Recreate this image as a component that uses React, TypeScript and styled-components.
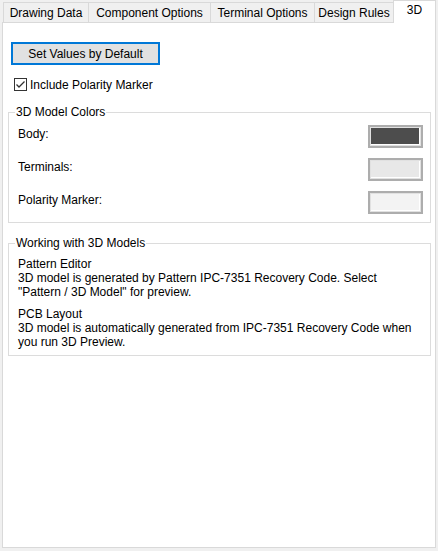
import React from "react";
import styled, { createGlobalStyle } from "styled-components";

const Global = createGlobalStyle`
  html, body { margin: 0; padding: 0; background: #f0f0f0; }
  body {
    font-family: "Liberation Sans", Arial, sans-serif;
    font-size: 12px;
    line-height: 14px;
    color: #000;
  }
`;

const Window = styled.div`
  width: 438px;
  height: 551px;
  box-sizing: border-box;
  padding: 0 2px 3px 2px;
  display: flex;
  flex-direction: column;
`;

const TabStrip = styled.div`
  display: flex;
  align-items: flex-end;
  height: 22px;
  padding-left: 1px;
  position: relative;
  z-index: 1;
`;

const Tab = styled.div<{ $active?: boolean; $w: number }>`
  box-sizing: border-box;
  width: ${(p) => p.$w}px;
  height: ${(p) => (p.$active ? 23 : 20)}px;
  margin-bottom: ${(p) => (p.$active ? -1 : 0)}px;
  margin-left: -1px;
  border: 1px solid #d9d9d9;
  border-bottom: none;
  background: ${(p) => (p.$active ? "#ffffff" : "#f0f0f0")};
  display: flex;
  justify-content: center;
  padding-top: ${(p) => (p.$active ? 2 : 3)}px;
  white-space: nowrap;
  &:first-child { margin-left: 0; }
`;

const Panel = styled.div`
  flex: 1;
  background: #fff;
  border: 1px solid #d9d9d9;
  padding: 19px 4px 0 5px;
  display: flex;
  flex-direction: column;
`;

const Button = styled.button`
  box-sizing: border-box;
  width: 149px;
  height: 23px;
  margin-left: 3px;
  border: 2px solid #0078d7;
  background: #e1e1e1;
  font: inherit;
  color: #000;
  padding: 0;
`;

const CheckRow = styled.label`
  display: flex;
  align-items: center;
  gap: 3px;
  margin: 13px 0 0 6px;
  height: 13px;
`;

const CheckBox = styled.span`
  box-sizing: border-box;
  width: 13px;
  height: 13px;
  border: 1px solid #333;
  background: #fff;
  display: flex;
  align-items: center;
  justify-content: center;
`;

const Group = styled.fieldset<{ $mt: number; $pt: number; $pb: number }>`
  margin: ${(p) => p.$mt}px 0 0 0;
  border: 1px solid #dcdcdc;
  padding: ${(p) => p.$pt}px 7px ${(p) => p.$pb}px 6px;
  min-width: 0;
`;

const Legend = styled.legend`
  padding: 0 1px;
  line-height: 14px;
`;

const ColorRows = styled.div`
  display: flex;
  flex-direction: column;
  gap: 10px;
`;

const ColorRow = styled.div`
  display: flex;
  justify-content: space-between;
  align-items: flex-start;
  height: 23px;
`;

const RowLabel = styled.span`
  margin: 2px 0 0 3px;
`;

const Swatch = styled.div`
  box-sizing: border-box;
  width: 55px;
  height: 23px;
  border: 2px solid #adadad;
  padding: 1px;
  background: #e1e1e1;
  display: flex;
`;

const SwatchFill = styled.div<{ $c: string }>`
  flex: 1;
  background: ${(p) => p.$c};
  border-right: 1px solid #fff;
  border-bottom: 1px solid #fff;
`;

const Para = styled.p`
  margin: 0 0 8px 3px;
  &:last-child { margin-bottom: 0; }
`;

const tabs: [string, number][] = [
  ["Drawing Data", 86],
  ["Component Options", 123],
  ["Terminal Options", 105],
  ["Design Rules", 80],
];

export default function App() {
  return (
    <>
      <Global />
      <Window>
        <TabStrip>
          {tabs.map(([t, w]) => (
            <Tab key={t} $w={w}>{t}</Tab>
          ))}
          <Tab $active $w={43}>3D</Tab>
        </TabStrip>
        <Panel>
          <Button>Set Values by Default</Button>
          <CheckRow>
            <CheckBox>
              <svg width="11" height="11" viewBox="0 0 11 11">
                <path d="M1.5 5.5 L4 8 L9.5 2.5" fill="none" stroke="#333" strokeWidth="1.3" />
              </svg>
            </CheckBox>
            Include Polarity Marker
          </CheckRow>
          <Group $mt={14} $pt={6} $pb={8}>
            <Legend>3D Model Colors</Legend>
            <ColorRows>
              <ColorRow>
                <RowLabel>Body:</RowLabel>
                <Swatch><SwatchFill $c="#4d4d4d" /></Swatch>
              </ColorRow>
              <ColorRow>
                <RowLabel>Terminals:</RowLabel>
                <Swatch><SwatchFill $c="#e8e8e8" /></Swatch>
              </ColorRow>
              <ColorRow>
                <RowLabel>Polarity Marker:</RowLabel>
                <Swatch><SwatchFill $c="#f3f3f3" /></Swatch>
              </ColorRow>
            </ColorRows>
          </Group>
          <Group $mt={13} $pt={7} $pb={6}>
            <Legend>Working with 3D Models</Legend>
            <Para>
              Pattern Editor
              <br />
              3D model is generated by Pattern IPC-7351 Recovery Code. Select
              <br />
              "Pattern / 3D Model" for preview.
            </Para>
            <Para>
              PCB Layout
              <br />
              3D model is automatically generated from IPC-7351 Recovery Code when
              <br />
              you run 3D Preview.
            </Para>
          </Group>
        </Panel>
      </Window>
    </>
  );
}
